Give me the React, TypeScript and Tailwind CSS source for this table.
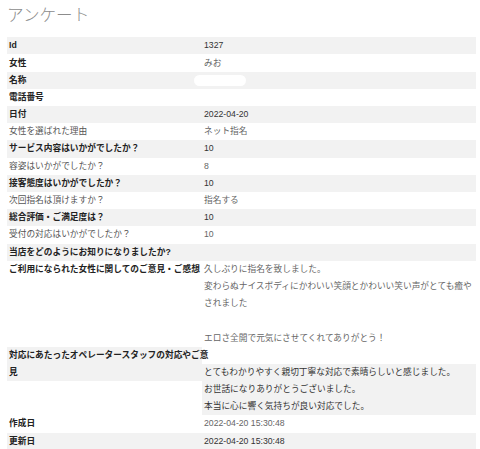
import React from 'react';

type Row = {
    label: string[];
    value: string[];
    bold?: boolean;
    redacted?: boolean;
};

const rows: Row[] = [
    { label: ['Id'], value: ['1327'], bold: true },
    { label: ['女性'], value: ['みお'], bold: true },
    { label: ['名称'], value: [], bold: true, redacted: true },
    { label: ['電話番号'], value: [], bold: true },
    { label: ['日付'], value: ['2022-04-20'], bold: true },
    { label: ['女性を選ばれた理由'], value: ['ネット指名'] },
    { label: ['サービス内容はいかがでしたか？'], value: ['10'], bold: true },
    { label: ['容姿はいかがでしたか？'], value: ['8'] },
    { label: ['接客態度はいかがでしたか？'], value: ['10'], bold: true },
    { label: ['次回指名は頂けますか？'], value: ['指名する'] },
    { label: ['総合評価・ご満足度は？'], value: ['10'], bold: true },
    { label: ['受付の対応はいかがでしたか？'], value: ['10'] },
    { label: ['当店をどのようにお知りになりましたか?'], value: [], bold: true },
    {
        label: ['ご利用になられた女性に関してのご意見・ご感想'],
        value: [
            '久しぶりに指名を致しました。',
            '変わらぬナイスボディにかわいい笑顔とかわいい笑い声がとても癒や',
            'されました',
            '',
            'エロさ全開で元気にさせてくれてありがとう！',
        ],
        bold: true,
    },
];

const operatorValue = [
    'とてもわかりやすく親切丁寧な対応で素晴らしいと感じました。',
    'お世話になりありがとうございました。',
    '本当に心に響く気持ちが良い対応でした。',
];

const tail: Row[] = [
    { label: ['作成日'], value: ['2022-04-20 15:30:48'], bold: true },
    { label: ['更新日'], value: ['2022-04-20 15:30:48'], bold: true },
];

const Line = ({ children }: { children: React.ReactNode }) => (
    <div className="h-[17.2px] flex items-center whitespace-nowrap">{children}</div>
);

const SurveyRow = ({ row, striped }: { row: Row; striped: boolean }) => {
    const bg = striped ? 'bg-[#f2f2f2]' : 'bg-white';
    return (
        <div className={`grid grid-cols-[195px_1fr] ${bg}`}>
            <div className={`pl-[2px] ${row.bold ? 'font-bold text-[#222]' : 'text-[#555]'}`}>
                {row.label.map((l, i) => <Line key={i}>{l}</Line>)}
            </div>
            <div className={`pl-[2px] ${striped ? 'text-[#333]' : 'text-[#666]'}`}>
                {row.redacted ? (
                    <Line><span className="-ml-[10px] block w-[52px] h-[11px] rounded-full bg-white" /></Line>
                ) : row.value.length === 0 ? (
                    <Line>{''}</Line>
                ) : (
                    row.value.map((v, i) => <Line key={i}>{v}</Line>)
                )}
            </div>
        </div>
    );
};

const App = () => {
    return (
        <div
            className="w-[480px] h-[449px] overflow-hidden bg-white px-[7px] pr-[4px] text-[8.7px]"
            style={{ fontFamily: '"Liberation Sans", "Noto Sans CJK JP", sans-serif' }}
        >
            <h1 className="pt-[5px] h-[37.3px] text-[16.6px] leading-[22px] font-light text-[#8c8c8c]">アンケート</h1>
            <div>
                {rows.map((row, i) => <SurveyRow key={i} row={row} striped={i % 2 === 0} />)}

                {/* operator comment: label wraps past its column, value drops one line */}
                <div className="grid grid-cols-[195px_1fr]">
                    <div className="pl-[2px] font-bold text-[#222] bg-[#f2f2f2] self-start">
                        <Line>対応にあたったオペレータースタッフの対応やご意</Line>
                        <Line>見</Line>
                    </div>
                    <div className="pt-[17.2px]">
                        <div className="pl-[2px] bg-[#f2f2f2] text-[#333]">
                            {operatorValue.map((v, i) => <Line key={i}>{v}</Line>)}
                        </div>
                    </div>
                </div>

                {tail.map((row, i) => <SurveyRow key={i} row={row} striped={i % 2 === 1} />)}
            </div>
        </div>
    );
};

export default App;
